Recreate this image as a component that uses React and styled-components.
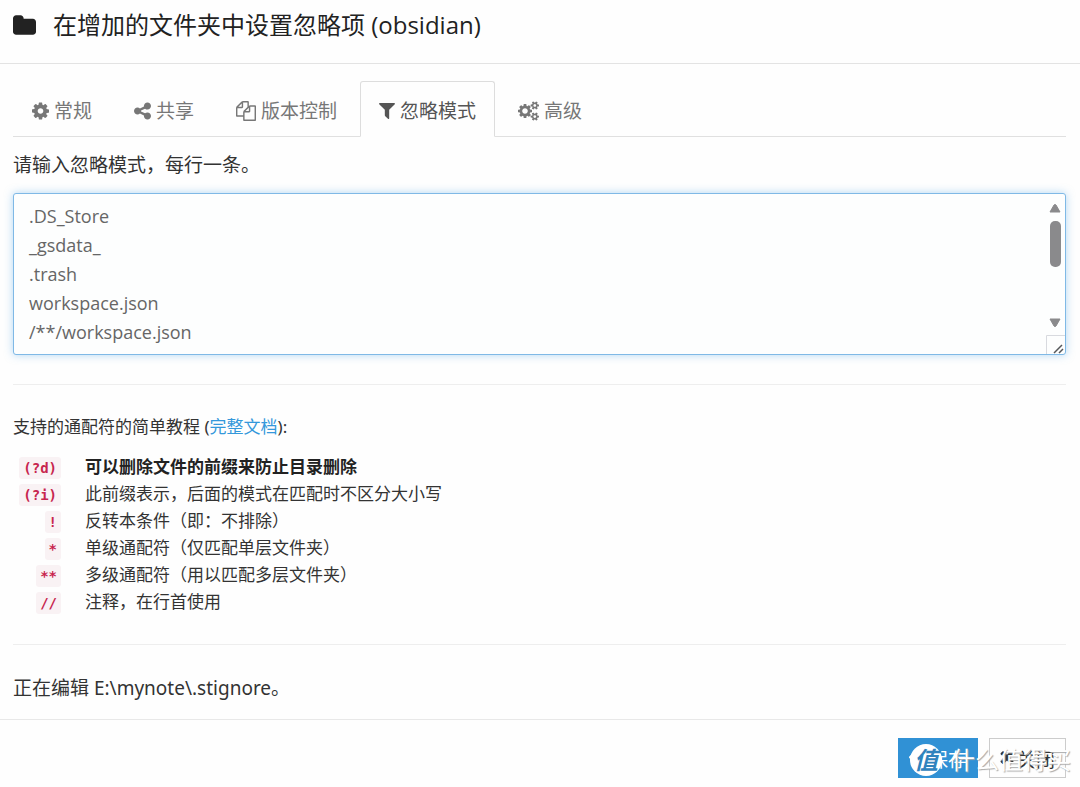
import styled, { createGlobalStyle, css } from 'styled-components';

const ICONS = {
  folder: {
    box: '64 128 1664 1408',
    d: 'M1728 608v704q0 92-66 158t-158 66h-1216q-92 0-158-66t-66-158v-960q0-92 66-158t158-66h320q92 0 158 66t66 158v32h672q92 0 158 66t66 158z',
  },
  cog: {
    box: '128 128 1536 1536',
    d: 'M1152 896q0-106-75-181t-181-75-181 75-75 181 75 181 181 75 181-75 75-181zm512-109v222q0 12-8 23t-20 13l-185 28q-19 54-39 91 35 50 107 138 10 12 10 25t-9 23q-27 37-99 108t-94 71q-12 0-26-9l-138-108q-44 23-91 38-16 136-29 186-7 28-36 28h-222q-14 0-24.500-8.500t-11.500-21.500l-28-184q-49-16-90-37l-141 107q-10 9-25 9-14 0-25-11-126-114-165-168-7-10-7-23 0-12 8-23 15-21 51-66.500t54-70.500q-27-50-41-99l-183-27q-13-2-21-12.500t-8-23.500v-222q0-12 8-23t19-13l186-28q14-46 39-92-40-57-107-138-10-12-10-24 0-10 9-23 26-36 98.500-107.500t94.500-71.500q13 0 26 10l138 107q44-23 91-38 16-136 29-186 7-28 36-28h222q14 0 24.500 8.500t11.500 21.500l28 184q49 16 90 37l142-107q9-9 24-9 13 0 25 10 129 119 165 170 7 8 7 22 0 12-8 23-15 21-51 66.500t-54 70.500q26 50 41 98l183 28q13 2 21 12.500t8 23.500z',
  },
  share: {
    box: '128 128 1536 1536',
    d: 'M1344 1024q133 0 226.500 93.500t93.500 226.500-93.500 226.500-226.500 93.500-226.500-93.500-93.500-226.500q0-12 2-34l-360-180q-92 86-218 86-133 0-226.500-93.500t-93.500-226.500 93.500-226.500 226.500-93.500q126 0 218 86l360-180q-2-22-2-34 0-133 93.500-226.500t226.500-93.500 226.500 93.500 93.500 226.500-93.500 226.500-226.500 93.500q-126 0-218-86l-360 180q2 22 2 34t-2 34l360 180q92-86 218-86z',
  },
  files: {
    box: '0 0 1792 1792',
    d: 'M1696 384q40 0 68 28t28 68v1216q0 40-28 68t-68 28h-960q-40 0-68-28t-28-68v-288h-544q-40 0-68-28t-28-68v-672q0-40 20-88t48-76l408-408q28-28 76-48t88-20h416q40 0 68 28t28 68v328q68-40 128-40h416zm-544 213l-299 299h299v-299zm-640-384l-299 299h299v-299zm196 647l316-316v-416h-384v416q0 40-28 68t-68 28h-416v640h512v-256q0-40 20-88t48-76zm956 804v-1152h-384v416q0 40-28 68t-68 28h-416v640h896z',
  },
  filter: {
    box: '192 256 1408 1408',
    d: 'M1595 295q17 41-14 70l-493 493v742q0 42-39 59-13 5-25 5-27 0-45-19l-256-256q-19-19-19-45v-486l-493-493q-31-29-14-70 17-39 59-39h1280q42 0 59 39z',
  },
  cogs: {
    box: '0 100 1920 1592',
    d: 'M896 896q0-106-75-181t-181-75-181 75-75 181 75 181 181 75 181-75 75-181zm768 512q0-52-38-90t-90-38-90 38-38 90q0 53 37.500 90.500t90.500 37.500 90.500-37.500 37.500-90.500zm0-1024q0-52-38-90t-90-38-90 38-38 90q0 53 37.500 90.500t90.500 37.500 90.500-37.500 37.500-90.500zm-384 421v185q0 10-7 19.500t-16 10.500l-155 24q-11 35-32 76 34 48 90 115 7 11 7 20 0 12-7 19-23 30-82.500 89.500t-78.500 59.500q-11 0-21-7l-115-90q-37 19-77 31-11 108-23 155-7 24-30 24h-186q-11 0-20-7.500t-10-17.500l-23-153q-34-10-75-31l-118 89q-7 7-20 7-11 0-21-8-144-133-144-160 0-9 7-19 10-14 41-53t47-61q-23-44-35-82l-152-24q-10-1-17-9.500t-7-19.500v-185q0-10 7-19.500t16-10.500l155-24q11-35 32-76-34-48-90-115-7-11-7-20 0-12 7-20 22-30 82-89t79-59q11 0 21 7l115 90q34-18 77-32 11-108 23-154 7-24 30-24h186q11 0 20 7.500t10 17.500l23 153q34 10 75 31l118-89q8-7 20-7 11 0 21 8 144 133 144 160 0 8-7 19-12 16-42 54t-45 60q23 48 34 82l152 23q10 2 17 10.500t7 19.500zm640 533v140q0 16-149 31-12 27-30 52 51 113 51 138 0 4-4 7-122 71-124 71-8 0-46-47t-52-68q-20 2-30 2t-30-2q-14 21-52 68t-46 47q-2 0-124-71-4-3-4-7 0-25 51-138-18-25-30-52-149-15-149-31v-140q0-16 149-31 13-29 30-52-51-113-51-138 0-4 4-7 4-2 35-20t59-34 30-16q8 0 46 46.500t52 67.500q20-2 30-2t30 2q51-71 92-112l6-2q4 0 124 70 4 3 4 7 0 25-51 138 17 23 30 52 149 15 149 31zm0-1024v140q0 16-149 31-12 27-30 52 51 113 51 138 0 4-4 7-122 71-124 71-8 0-46-47t-52-68q-20 2-30 2t-30-2q-14 21-52 68t-46 47q-2 0-124-71-4-3-4-7 0-25 51-138-18-25-30-52-149-15-149-31v-140q0-16 149-31 13-29 30-52-51-113-51-138 0-4 4-7 4-2 35-20t59-34 30-16q8 0 46 46.500t52 67.500q20-2 30-2t30 2q51-71 92-112l6-2q4 0 124 70 4 3 4 7 0 25-51 138 17 23 30 52 149 15 149 31z',
  },
  check: {
    box: '121 100 1550 1792',
    d: 'M1671 566q0 40-28 68l-724 724-136 136q-28 28-68 28t-68-28l-136-136-362-362q-28-28-28-68t28-68l136-136q28-28 68-28t68 28l294 295 656-657q28-28 68-28t68 28l136 136q28 28 28 68z',
  },
  times: {
    box: '250 100 1292 1792',
    d: 'M1490 1322q0 40-28 68l-136 136q-28 28-68 28t-68-28l-294-294-294 294q-28 28-68 28t-68-28l-136-136q-28-28-28-68t28-68l294-294-294-294q-28-28-28-68t28-68l136-136q28-28 68-28t68 28l294 294 294-294q28-28 68-28t68 28l136 136q28 28 28 68t-28 68l-294 294 294 294q28 28 28 68z',
  },
};

const TABS = [
  { icon: 'cog', size: 17, label: '常规' },
  { icon: 'share', size: 17, label: '共享' },
  { icon: 'files', size: 20, label: '版本控制' },
  { icon: 'filter', size: 16, label: '忽略模式', active: true },
  { icon: 'cogs', size: 21, label: '高级' },
];

const PATTERNS = ['.DS_Store', '_gsdata_', '.trash', 'workspace.json', '/**/workspace.json'].join('\n');

const WILDCARDS = [
  { code: '(?d)', text: '可以删除文件的前缀来防止目录删除', strong: true },
  { code: '(?i)', text: '此前缀表示，后面的模式在匹配时不区分大小写' },
  { code: '!', text: '反转本条件（即：不排除）' },
  { code: '*', text: '单级通配符（仅匹配单层文件夹）' },
  { code: '**', text: '多级通配符（用以匹配多层文件夹）' },
  { code: '//', text: '注释，在行首使用' },
];

function Icon({ name, size }) {
  return (
    <IconSvg viewBox={ICONS[name].box} $size={size} aria-hidden="true">
      <path d={ICONS[name].d} />
    </IconSvg>
  );
}

function App() {
  return (
    <Modal>
      <GlobalStyle />
      <Header>
        <Icon name="folder" size={23} />
        <Title>在增加的文件夹中设置忽略项 (obsidian)</Title>
      </Header>
      <Body>
        <Tabs>
          {TABS.map((tab) => (
            <Tab key={tab.label} href="#" $active={tab.active}>
              <Icon name={tab.icon} size={tab.size} />
              {tab.label}
            </Tab>
          ))}
        </Tabs>
        <Prompt htmlFor="ignores">请输入忽略模式，每行一条。</Prompt>
        <Editor>
          <Patterns id="ignores" rows={5} spellCheck={false} defaultValue={PATTERNS} />
          <ScrollBar viewBox="0 0 20 160" aria-hidden="true">
            <path d="M5 18l4-7q1-1 2 0l4 7z M5 125l4 7q1 1 2 0l4-7z" fill="#8a8a8c" stroke="#8a8a8c" strokeLinejoin="round" />
            <rect x="5" y="27" width="11" height="46" rx="5" fill="#8a8a8c" />
            <path d="M1.500 160V141.500H20" fill="none" stroke="#d8dadf" />
            <path d="M9 159l8-8M14 159l4-4" fill="none" stroke="#55575a" strokeWidth="1.500" />
          </ScrollBar>
        </Editor>
        <Divider />
        <Guide>
          支持的通配符的简单教程 (<DocLink href="#">完整文档</DocLink>):
        </Guide>
        <WildcardList>
          {WILDCARDS.map((item) => (
            <WildcardRow key={item.code}>
              <Term><Code>{item.code}</Code></Term>
              <Meaning $strong={item.strong}>{item.text}</Meaning>
            </WildcardRow>
          ))}
        </WildcardList>
        <Divider />
        <Editing>正在编辑 E:\mynote\.stignore。</Editing>
      </Body>
      <Footer>
        <Button type="button" $primary>
          <Icon name="check" size={17} />
          保存
        </Button>
        <Button type="button">
          <Icon name="times" size={14} />
          关闭
        </Button>
        <Watermark>
          <Seal>值</Seal>
          什么值得买
        </Watermark>
      </Footer>
    </Modal>
  );
}

const GlobalStyle = createGlobalStyle`
  * {
    box-sizing: border-box;
  }
  body {
    margin: 0;
    background: #fefefe;
    color: #333333;
    font-family: "Noto Sans", "Noto Sans CJK SC", sans-serif;
    font-size: 19px;
    line-height: 28px;
  }
`;

const Modal = styled.div`
  width: 100%;
`;

const IconSvg = styled.svg`
  flex: none;
  width: ${({ $size }) => $size}px;
  height: 20px;
  fill: currentColor;
`;

const Header = styled.header`
  display: flex;
  align-items: center;
  gap: 17px;
  height: 64px;
  padding: 0 13px 13px;
  border-bottom: 1px solid #e3e3e3;
  color: #222222;
`;

const Title = styled.h4`
  margin: 0;
  font-family: "Open Sans", "Noto Sans CJK SC", sans-serif;
  font-weight: 400;
  font-size: 24px;
`;

const Body = styled.main`
  padding: 17px 14px 16px 13px;
`;

const Tabs = styled.nav`
  display: flex;
  gap: 4px;
  border-bottom: 1px solid #e0e0e0;
`;

const Tab = styled.a`
  display: flex;
  align-items: center;
  gap: 5px;
  height: 56px;
  margin-bottom: -1px;
  padding: 4px 18px 0;
  border: 1px solid transparent;
  border-radius: 3px 3px 0 0;
  color: #777777;
  text-decoration: none;
  ${({ $active }) => $active && css`
    border-color: #dddddd;
    border-bottom-color: #fefefe;
    background: #fefefe;
    color: #555555;
  `}
`;

const Prompt = styled.label`
  display: block;
  margin: 14px 0;
`;

const Editor = styled.div`
  position: relative;
`;

const Patterns = styled.textarea`
  display: block;
  width: 100%;
  height: 162px;
  padding: 8px 28px 8px 15px;
  border: 1px solid #7fb9e6;
  border-radius: 3px;
  outline: none;
  resize: none;
  overflow: hidden;
  background: #fdfefe;
  box-shadow: 0 0 8px rgba(102, 175, 233, 0.5);
  color: #666666;
  font: 400 18px/29px "Open Sans", "Noto Sans CJK SC", sans-serif;
`;

const ScrollBar = styled.svg`
  position: absolute;
  top: 1px;
  right: 1px;
  width: 20px;
  height: 160px;
`;

const Divider = styled.hr`
  margin: 29px 0 28px;
  border: 0;
  border-top: 1px solid #eeeeee;
`;

const Guide = styled.p`
  margin: 0 0 12px;
  font-size: 17px;
`;

const DocLink = styled.a`
  color: #3498db;
  text-decoration: none;
`;

const WildcardList = styled.dl`
  margin: 0;
  font-size: 17px;
  line-height: 27px;
`;

const WildcardRow = styled.div`
  display: grid;
  grid-template-columns: 48px 1fr;
  column-gap: 24px;
`;

const Term = styled.dt`
  text-align: right;
`;

const Code = styled.code`
  padding: 3px 4px;
  border-radius: 3px;
  background: #f9f2f4;
  color: #c7254e;
  font: 700 14px "DejaVu Sans Mono", monospace;
`;

const Meaning = styled.dd`
  margin: 0;
  color: ${({ $strong }) => ($strong ? '#222222' : '#333333')};
  font-weight: ${({ $strong }) => ($strong ? 700 : 400)};
`;

const Editing = styled.p`
  margin: 0;
  line-height: 30px;
`;

const Footer = styled.footer`
  position: relative;
  display: flex;
  justify-content: flex-end;
  gap: 11px;
  padding: 18px 14px 9px;
  border-top: 1px solid #e8e8e8;
`;

const Button = styled.button`
  display: flex;
  align-items: center;
  gap: 3px;
  height: 40px;
  padding: 0 10px;
  border: 1px solid ${({ $primary }) => ($primary ? '#3091d5' : '#cccccc')};
  background: ${({ $primary }) => ($primary ? '#3091d5' : '#fefefe')};
  color: ${({ $primary }) => ($primary ? '#ffffff' : '#333333')};
  font: 400 19px "Noto Sans CJK SC", sans-serif;
`;

const Watermark = styled.div`
  position: absolute;
  right: 9px;
  bottom: 10px;
  display: flex;
  align-items: center;
  gap: 9px;
  color: #ffffff;
  font-size: 24px;
  line-height: 34px;
  text-shadow: 1px 1px 1px #aaaaaa;
  pointer-events: none;
`;

const Seal = styled.span`
  width: 32px;
  height: 32px;
  border-radius: 50%;
  background: #ffffff;
  color: #2f83bd;
  font-weight: 700;
  font-size: 24px;
  font-style: italic;
  line-height: 32px;
  text-align: center;
  text-shadow: none;
`;

export default App;
